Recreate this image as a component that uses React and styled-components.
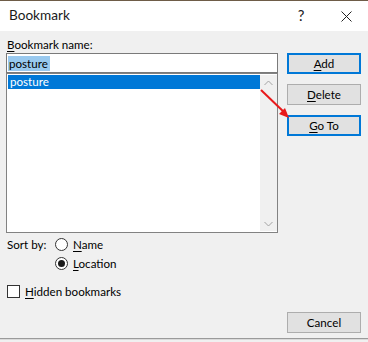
import React from 'react';
import styled, { createGlobalStyle } from 'styled-components';

const GlobalStyle = createGlobalStyle`
  html, body {
    margin: 0;
    padding: 0;
    background: #f0f0f0;
  }
  body {
    font-family: 'Segoe UI', Lato, 'Noto Sans', sans-serif;
    font-size: 11.6px;
    color: #000;
  }
`;

const Window = styled.div`
  position: relative;
  width: 368px;
  height: 342px;
  box-sizing: border-box;
  display: flex;
  flex-direction: column;
  background: #f0f0f0;
  border-top: 1px solid #6e5c48;
  overflow: hidden;
`;

const TitleBar = styled.div`
  height: 30px;
  flex: none;
  background: #fff;
  display: flex;
  align-items: center;
  padding-left: 9px;
`;

const Title = styled.div`
  flex: 1;
  font-size: 13.6px;
  color: #1a1a1a;
  padding-bottom: 2px;
`;

const HelpGlyph = styled.div`
  width: 20px;
  font-size: 15px;
  color: #222;
  margin-right: 30px;
  text-align: center;
  padding-bottom: 2px;
`;

const CloseGlyph = styled.svg`
  margin-right: 16px;
`;

const Body = styled.div`
  flex: 1;
  display: grid;
  grid-template-columns: 272px 74px;
  column-gap: 9px;
  padding: 5px 0 0 6px;
  border-bottom: 1px solid #9a9a9a;
  box-shadow: 0 1px 0 #dadada;
  margin-bottom: 3px;
`;

const LeftCol = styled.div`
  display: flex;
  flex-direction: column;
`;

const Label = styled.div`
  height: 17px;
  line-height: 17px;
  padding-left: 1px;
`;

const Mn = styled.span`
  text-decoration: underline;
  text-underline-offset: 2px;
`;

const NameInput = styled.div`
  height: 20px;
  box-sizing: border-box;
  background: #fff;
  border: 1px solid #7a7a7a;
  display: flex;
  align-items: center;
  padding-left: 1px;
`;

const Selected = styled.span`
  background: #99c9ef;
  padding: 0 2px 0 1px;
  line-height: 15px;
`;

const List = styled.div`
  height: 160px;
  box-sizing: border-box;
  background: #fff;
  border: 1px solid #828282;
  display: flex;
  padding: 1px 0 1px 1px;
`;

const Items = styled.div`
  flex: 1;
`;

const Item = styled.div`
  height: 14px;
  line-height: 13px;
  padding-left: 2px;
  background: ${p => (p.$active ? '#0078d7' : 'transparent')};
  color: ${p => (p.$active ? '#fff' : '#000')};
`;

const ScrollBar = styled.div`
  width: 17px;
  background: #f0f0f0;
  display: flex;
  flex-direction: column;
  justify-content: space-between;
  align-items: center;
  padding: 5px 0 4px;
`;

const SortRow = styled.div`
  display: grid;
  grid-template-columns: 48px auto;
  grid-auto-rows: 19px;
  margin-top: 2px;
  padding-left: 1px;
`;

const SortLabel = styled.div`
  line-height: 19px;
`;

const Option = styled.div`
  grid-column: 2;
  grid-row: ${p => p.$row};
  display: flex;
  align-items: center;
  gap: 5px;
`;

const Radio = styled.span`
  width: 13px;
  height: 13px;
  box-sizing: border-box;
  border-radius: 50%;
  border: 1px solid #333;
  background: #fff;
  display: flex;
  align-items: center;
  justify-content: center;
  &::after {
    content: '';
    width: 7px;
    height: 7px;
    border-radius: 50%;
    background: ${p => (p.$checked ? '#1a1a1a' : 'transparent')};
  }
`;

const CheckRow = styled.div`
  display: flex;
  align-items: center;
  gap: 5px;
  margin-top: 10px;
  height: 17px;
  padding-left: 1px;
`;

const Box = styled.span`
  width: 13px;
  height: 13px;
  box-sizing: border-box;
  border: 1px solid #333;
  background: #fff;
`;

const RightCol = styled.div`
  display: flex;
  flex-direction: column;
  gap: 10px;
  padding-top: 17px;
  padding-bottom: 5px;
`;

const Button = styled.div`
  height: 21px;
  box-sizing: border-box;
  background: #e1e1e1;
  border: ${p => (p.$focus ? '2px solid #0078d7' : '1px solid #adadad')};
  display: flex;
  align-items: center;
  justify-content: center;
  padding-bottom: 1px;
  &:last-child {
    margin-top: auto;
  }
`;

const Arrow = styled.svg`
  position: absolute;
  left: 258px;
  top: 85px;
  pointer-events: none;
`;

const Chevron = ({ up }) => (
  <svg width="9" height="6" viewBox="0 0 9 6">
    <path
      d={up ? 'M0.5 5 L4.5 1 L8.5 5' : 'M0.5 1 L4.5 5 L8.5 1'}
      fill="none"
      stroke="#a3a3a3"
      strokeWidth="1"
    />
  </svg>
);

export default function App() {
  return (
    <>
      <GlobalStyle />
      <Window>
        <TitleBar>
          <Title>Bookmark</Title>
          <HelpGlyph>?</HelpGlyph>
          <CloseGlyph width="11" height="11" viewBox="0 0 11 11">
            <path d="M0.5 0.5 L10.5 10.5 M10.5 0.5 L0.5 10.5" stroke="#222" strokeWidth="1" />
          </CloseGlyph>
        </TitleBar>
        <Body>
          <LeftCol>
            <Label>
              <Mn>B</Mn>ookmark name:
            </Label>
            <NameInput>
              <Selected>posture</Selected>
            </NameInput>
            <List>
              <Items>
                <Item $active>posture</Item>
              </Items>
              <ScrollBar>
                <Chevron up />
                <Chevron />
              </ScrollBar>
            </List>
            <SortRow>
              <SortLabel>Sort by:</SortLabel>
              <Option $row={1}>
                <Radio />
                <span>
                  <Mn>N</Mn>ame
                </span>
              </Option>
              <Option $row={2}>
                <Radio $checked />
                <span>
                  <Mn>L</Mn>ocation
                </span>
              </Option>
            </SortRow>
            <CheckRow>
              <Box />
              <span>
                <Mn>H</Mn>idden bookmarks
              </span>
            </CheckRow>
          </LeftCol>
          <RightCol>
            <Button $focus>
              <span>
                <Mn>A</Mn>dd
              </span>
            </Button>
            <Button>
              <span>
                <Mn>D</Mn>elete
              </span>
            </Button>
            <Button $focus>
              <span>
                <Mn>G</Mn>o To
              </span>
            </Button>
            <Button>Cancel</Button>
          </RightCol>
        </Body>
        <Arrow width="34" height="36" viewBox="0 0 34 36">
          <path d="M3 4 L28 28" stroke="#e8191b" strokeWidth="2" />
          <path d="M31 32 L21 28 L27 22 Z" fill="#e8191b" />
        </Arrow>
      </Window>
    </>
  );
}
